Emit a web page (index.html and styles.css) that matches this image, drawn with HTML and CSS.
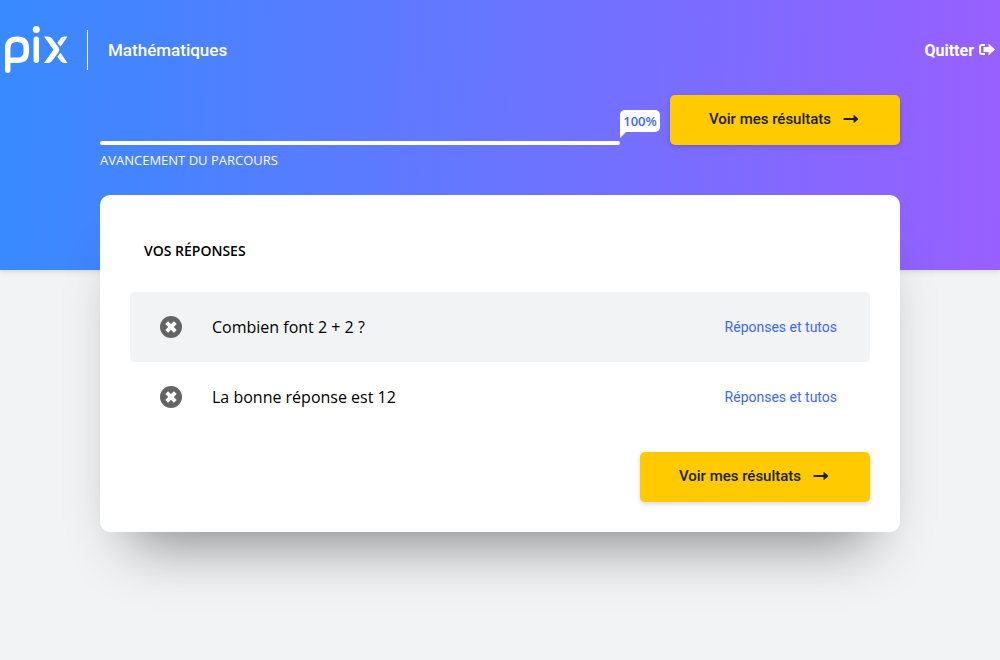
FILE: index.html
```html
<!DOCTYPE html>
<html lang="fr">
<head>
<meta charset="utf-8">
<meta name="viewport" content="width=device-width, initial-scale=1">
<title>Mathématiques | Pix</title>
<link rel="stylesheet" href="styles.css">
</head>
<body>
<div class="banner">
  <header class="topbar">
    <svg class="logo" viewBox="0 0 64 48" role="img" aria-label="pix">
      <g fill="none" stroke="#fff" stroke-width="5.500" stroke-linecap="round" stroke-linejoin="round">
        <path d="M2.700 44.300V22Q2.700 13.200 11.500 13.200H12.500Q21.300 13.200 21.300 22V25.500Q21.300 34.300 12.500 34.300H4"/>
        <path d="M31.300 13.200V34.300"/>
      </g>
      <circle cx="31.300" cy="3.600" r="3.500" fill="#fff"/>
      <path fill="#fff" d="M39 10.500H43Q45.500 10.500 47 12.400L53.500 21.200Q55.200 23.700 53.500 26.300L47 35.100Q45.500 37 43 37H39L48.500 23.700zM62.500 10.500H59.500Q57 10.500 55.500 12.400L52.300 16.700 55.500 20.700zM62.500 37H59.500Q57 37 55.500 35.100L52.300 30.800 55.500 26.800z"/>
    </svg>
    <h1 class="course">Mathématiques</h1>
    <a class="quit" href="#">Quitter
      <svg class="quit-icon" viewBox="0 0 16 14" aria-hidden="true">
        <path d="M6 2H3Q1 2 1 4V9Q1 11 3 11H6" fill="none" stroke="#fff" stroke-width="2"/>
        <path d="M9.500.6 16 6.500 9.500 12.400V9H4.500V4H9.500z" fill="#fff"/>
      </svg>
    </a>
  </header>
</div>
<main class="content">
  <section class="checkpoint">
    <div class="progress">
      <div class="track"><span class="bubble">100%</span></div>
      <p class="caption">Avancement du parcours</p>
    </div>
    <button class="cta" type="button">Voir mes résultats
      <svg class="arrow" viewBox="0 0 16 10" aria-hidden="true"><path d="M1 4H10.500V1.500Q10.500.5 11.300 1.200L15 4.500Q15.500 5 15 5.500L11.300 8.800Q10.500 9.500 10.500 8.500V6H1Q.5 6 .5 5.500V4.500Q.5 4 1 4z"/></svg>
    </button>
  </section>
  <section class="card">
    <h2 class="card-title">Vos réponses</h2>
    <ul class="answers">
      <li class="answer">
        <svg class="wrong" viewBox="0 0 22 22" role="img" aria-label="Réponse incorrecte"><circle cx="11" cy="11" r="11"/><path d="M6.700 6.700l8.600 8.600M15.300 6.700l-8.600 8.600"/></svg>
        <span class="question">Combien font 2 + 2 ?</span>
        <button class="details" type="button">Réponses et tutos</button>
      </li>
      <li class="answer">
        <svg class="wrong" viewBox="0 0 22 22" role="img" aria-label="Réponse incorrecte"><circle cx="11" cy="11" r="11"/><path d="M6.700 6.700l8.600 8.600M15.300 6.700l-8.600 8.600"/></svg>
        <span class="question">La bonne réponse est 12</span>
        <button class="details" type="button">Réponses et tutos</button>
      </li>
    </ul>
    <button class="cta" type="button">Voir mes résultats
      <svg class="arrow" viewBox="0 0 16 10" aria-hidden="true"><path d="M1 4H10.500V1.500Q10.500.5 11.300 1.200L15 4.500Q15.500 5 15 5.500L11.300 8.800Q10.500 9.500 10.500 8.500V6H1Q.5 6 .5 5.500V4.500Q.5 4 1 4z"/></svg>
    </button>
  </section>
</main>
</body>
</html>
```
FILE: styles.css
```css
* {
  box-sizing: border-box;
}

body {
  display: grid;
  grid-template-rows: 95px 175px 1fr;
  min-height: 100vh;
  margin: 0;
  background: #f1f3f5;
  color: #000;
  font-family: "Open Sans", "Noto Sans", sans-serif;
}

h1, h2, p, ul {
  margin: 0;
  padding: 0;
}

button {
  border: 0;
  cursor: pointer;
}

.banner {
  grid-area: 1 / 1 / 3 / 2;
  background: linear-gradient(91deg, #388aff, #985fff);
  box-shadow: 0 2px 5px rgba(0, 0, 0, 0.1);
}

.topbar {
  display: flex;
  align-items: center;
  height: 100px;
  padding: 0 5px;
  color: #fff;
  font-family: Roboto, sans-serif;
}

.logo {
  width: 64px;
  height: 48px;
}

.course {
  margin-left: 18px;
  padding-left: 20px;
  border-left: 1px solid #fff;
  font-size: 17px;
  font-weight: 500;
  line-height: 40px;
}

.quit {
  display: flex;
  align-items: center;
  gap: 5px;
  margin-left: auto;
  color: #fff;
  font-size: 16px;
  font-weight: 700;
  text-decoration: none;
}

.quit-icon {
  width: 16px;
  height: 14px;
}

.content {
  grid-area: 2 / 1 / 4 / 2;
  width: 80%;
  margin: 0 auto;
}

.checkpoint {
  display: flex;
  gap: 50px;
  height: 100px;
}

.progress {
  flex: 1;
  padding-top: 46px;
}

.track {
  position: relative;
  height: 4px;
  border-radius: 2px;
  background: #fff;
}

.bubble {
  position: absolute;
  left: 100%;
  bottom: 13px;
  width: 40px;
  border-radius: 5px 5px 5px 0;
  background: #fff;
  color: #3d68ff;
  font-size: 13px;
  font-weight: 600;
  line-height: 22px;
  text-align: center;
}

.bubble::after {
  content: "";
  position: absolute;
  top: 100%;
  left: 0;
  border-top: 6px solid #fff;
  border-right: 6px solid transparent;
}

.caption {
  margin-top: 6px;
  color: #fff;
  font-size: 13px;
  line-height: 18px;
  text-transform: uppercase;
}

.cta {
  display: flex;
  align-items: center;
  justify-content: center;
  gap: 12px;
  width: 230px;
  height: 50px;
  padding: 0 2px 2px 0;
  border-radius: 5px;
  background: #ffca00;
  box-shadow: 0 2px 5px rgba(0, 0, 0, 0.16);
  color: #20201e;
  font-family: Roboto, sans-serif;
  font-size: 15px;
  font-weight: 500;
}

.arrow {
  width: 16px;
  height: 10px;
  fill: #20201e;
}

.card {
  padding: 44px 30px 30px;
  border-radius: 10px;
  background: #fff;
  box-shadow: 0 40px 56px -30px rgba(0, 0, 0, 0.46);
}

.card-title {
  padding-left: 14px;
  font-size: 14px;
  font-weight: 600;
  line-height: 24px;
  text-transform: uppercase;
}

.answers {
  margin: 29px 0 20px;
  list-style: none;
}

.answer {
  display: flex;
  align-items: center;
  gap: 30px;
  height: 70px;
  padding: 0 30px;
  border-radius: 5px;
}

.answer:nth-child(odd) {
  background: #f1f3f5;
}

.wrong {
  width: 22px;
  height: 22px;
  fill: #646464;
}

.wrong path {
  stroke: #fff;
  stroke-width: 4;
}

.question {
  flex: 1;
  font-size: 16px;
}

.details {
  padding: 0 3px;
  background: none;
  color: #3d68ff;
  font-family: Roboto, sans-serif;
  font-size: 14px;
}

.card .cta {
  margin-left: auto;
}
```
